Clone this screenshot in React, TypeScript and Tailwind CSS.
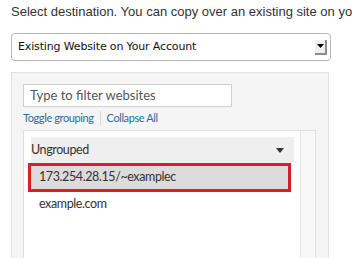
export default function App() {
  return (
    <div className="w-[352px] h-[258px] overflow-hidden bg-white relative">
      <div className="pl-[11px] pt-[4px] whitespace-nowrap overflow-hidden text-[13px] leading-[16px] text-[#333]" style={{ fontFamily: '"Liberation Sans", Arial, sans-serif' }}>
        Select destination. You can copy over an existing site on yo
      </div>
      <div className="ml-[11px] mt-[13px] w-[320px] h-[28px] rounded-[4px] border border-[#b9b9b9] flex items-center justify-between pl-[6px] pr-[3px]">
        <span className="text-[11px] tracking-[-0.15px] text-[#111]" style={{ fontFamily: '"DejaVu Sans", sans-serif' }}>Existing Website on Your Account</span>
        <div className="w-[12px] h-[15px] bg-[#f0f0f0] border-r-2 border-b-2 border-[#8c8c8c] flex items-center justify-center">
          <svg width="7" height="4" viewBox="0 0 7 4"><path d="M0 0 L7 0 L3.5 4 Z" fill="#000" /></svg>
        </div>
      </div>
      <div className="ml-[11px] mt-[11px] w-[318px] h-[200px] bg-[#f5f5f5] border border-[#e2e2e2] pl-[11px] pt-[11px]" style={{ fontFamily: 'Lato, "Open Sans", sans-serif' }}>
        <div className="w-[209px] h-[23px] bg-white border border-[#cfcfcf] flex items-center pl-[6px] text-[13px] text-[#555]">
          Type to filter websites
        </div>
        <div className="flex items-center h-[18px] mt-[2px] text-[11px] tracking-[-0.4px] text-[#2d6aa0]">
          <span>Toggle grouping</span>
          <span className="mx-[6px] w-px h-[14px] bg-[#d8d8d8]" />
          <span>Collapse All</span>
        </div>
        <div className="mt-[3px] w-[293px] h-[140px] bg-white border border-[#e0e0e0] flex">
          <div className="flex-1 pt-[6px] pl-[4px] pr-[6px] text-[12.5px] tracking-[-0.4px] text-[#333]">
            <div className="ml-[3px] h-[26px] bg-[#efefef] flex items-center justify-between pr-[10px]">
              <span>Ungrouped</span>
              <svg width="8" height="5" viewBox="0 0 8 5"><path d="M0 0 L8 0 L4 5 Z" fill="#333" /></svg>
            </div>
            <div className="h-[29px] border-[3px] border-[#d61f26] bg-[#dcdcdc] flex items-center pl-[8px] w-[263px]">
              173.254.28.15/~examplec
            </div>
            <div className="h-[24px] flex items-center pl-[11px]">
              example.com
            </div>
          </div>
          <div className="w-[15px] bg-[#f8f8f8] border-l border-[#e6e6e6]" />
        </div>
      </div>
    </div>
  );
}
